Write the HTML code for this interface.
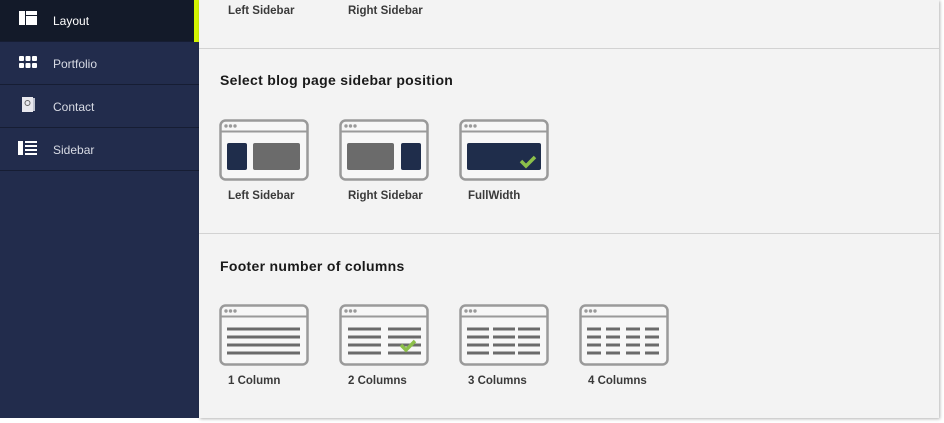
<!DOCTYPE html>
<html><head><meta charset="utf-8"><style>
*{margin:0;padding:0;box-sizing:border-box}
body{width:944px;height:423px;background:#fff;position:relative;overflow:hidden;font-family:"Liberation Sans",Arial,sans-serif}
#side{position:absolute;left:0;top:0;width:199px;height:418px;background:#222c4c}
.item{position:absolute;left:0;width:199px;height:42px;border-bottom:1px solid #161d33;color:#d8dbe4;font-size:12px}
.item span{position:absolute;left:53px;top:14px}
.item svg{position:absolute}
#main{position:absolute;left:199px;top:0;width:740px;height:418px;background:#f3f3f3;box-shadow:1px 1px 3px rgba(0,0,0,.3)}
.hr{position:absolute;left:0;width:740px;height:1px;background:#d2d2d2}
h3{position:absolute;left:21px;font-size:14px;font-weight:bold;color:#1a1a1a;letter-spacing:.3px}
.lbl{position:absolute;font-size:11.5px;font-weight:bold;color:#3a3a3a}
.th{position:absolute;width:90px;height:62px}
</style></head><body>
<div id="side">
 <div class="item" style="top:0;background:#131a29;color:#fff"><svg style="left:19px;top:11px" width="18" height="14"><rect x="0" y="0" width="6" height="14" fill="#fff"/><rect x="7" y="0" width="11" height="4" fill="#fff"/><rect x="7" y="5" width="11" height="9" fill="#fff"/></svg><span>Layout</span><div style="position:absolute;left:194px;top:0;width:5px;height:42px;background:#d4f500"></div></div>
 <div class="item" style="top:43px"><svg style="left:19px;top:13px" width="18" height="13" fill="#fff"><rect x="0" y="0" width="5" height="5" rx="1"/><rect x="6.5" y="0" width="5" height="5" rx="1"/><rect x="13" y="0" width="5" height="5" rx="1"/><rect x="0" y="7" width="5" height="5" rx="1"/><rect x="6.5" y="7" width="5" height="5" rx="1"/><rect x="13" y="7" width="5" height="5" rx="1"/></svg><span>Portfolio</span></div>
 <div class="item" style="top:86px"><svg style="left:22px;top:11px" width="14" height="15"><rect x="0" y="0" width="11" height="15" fill="#e8e8ee"/><rect x="11" y="1" width="2" height="13" fill="#bfc3cf"/><circle cx="5.5" cy="6" r="2.5" fill="none" stroke="#666" stroke-width="1"/></svg><span>Contact</span></div>
 <div class="item" style="top:129px"><svg style="left:18px;top:12px" width="19" height="14" fill="#fff"><rect x="0" y="0" width="5" height="14"/><rect x="7" y="0" width="12" height="2"/><rect x="7" y="4" width="12" height="2"/><rect x="7" y="8" width="12" height="2"/><rect x="7" y="12" width="12" height="2"/></svg><span>Sidebar</span></div>
</div>
<div id="main">
 <div class="lbl" style="left:29px;top:5px">Left Sidebar</div>
 <div class="lbl" style="left:149px;top:5px">Right Sidebar</div>
 <div class="hr" style="top:48px"></div>
 <h3 style="top:72px">Select blog page sidebar position</h3>
 <svg class="th" style="left:20px;top:119px"><use href="#frame"/><rect x="8" y="24" width="20" height="27" rx="2" fill="#1f2d4b"/><rect x="34" y="24" width="47" height="27" rx="2" fill="#6b6b6b"/></svg>
 <svg class="th" style="left:140px;top:119px"><use href="#frame"/><rect x="8" y="24" width="47" height="27" rx="2" fill="#6b6b6b"/><rect x="62" y="24" width="20" height="27" rx="2" fill="#1f2d4b"/></svg>
 <svg class="th" style="left:260px;top:119px"><use href="#frame"/><rect x="8" y="24" width="74" height="27" rx="2" fill="#1f2d4b"/><path d="M62 42 l5 5 l9 -9" stroke="#8cc04a" stroke-width="3.5" fill="none"/></svg>
 <div class="lbl" style="left:29px;top:190px">Left Sidebar</div>
 <div class="lbl" style="left:149px;top:190px">Right Sidebar</div>
 <div class="lbl" style="left:269px;top:190px">FullWidth</div>
 <div class="hr" style="top:233px"></div>
 <h3 style="top:258px">Footer number of columns</h3>
 <svg class="th" style="left:20px;top:304px"><use href="#frame"/><g stroke="#6b6b6b" stroke-width="3"><path d="M8 25H81M8 33H81M8 41H81M8 49H81"/></g></svg>
 <svg class="th" style="left:140px;top:304px"><use href="#frame"/><g stroke="#6b6b6b" stroke-width="3"><path d="M9 25H42M9 33H42M9 41H42M9 49H42M49 25H82M49 33H82M49 41H82M49 49H82"/></g><path d="M62 41 l5 5 l9 -9" stroke="#8cc04a" stroke-width="3.5" fill="none"/></svg>
 <svg class="th" style="left:260px;top:304px"><use href="#frame"/><g stroke="#6b6b6b" stroke-width="3"><path d="M8 25H30M8 33H30M8 41H30M8 49H30M34 25H56M34 33H56M34 41H56M34 49H56M59 25H81M59 33H81M59 41H81M59 49H81"/></g></svg>
 <svg class="th" style="left:380px;top:304px"><use href="#frame"/><g stroke="#6b6b6b" stroke-width="3"><path d="M8 25H22M8 33H22M8 41H22M8 49H22M27 25H41M27 33H41M27 41H41M27 49H41M47 25H61M47 33H61M47 41H61M47 49H61M66 25H80M66 33H80M66 41H80M66 49H80"/></g></svg>
 <div class="lbl" style="left:29px;top:375px">1 Column</div>
 <div class="lbl" style="left:149px;top:375px">2 Columns</div>
 <div class="lbl" style="left:269px;top:375px">3 Columns</div>
 <div class="lbl" style="left:389px;top:375px">4 Columns</div>
</div>
<svg width="0" height="0" style="position:absolute"><defs><g id="frame"><rect x="1.5" y="1.5" width="87" height="59" rx="5" fill="#f7f7f7" stroke="#9a9a9a" stroke-width="2.5"/><path d="M1.5 12.5H88.5" stroke="#9a9a9a" stroke-width="2"/><circle cx="7" cy="7" r="1.7" fill="#9a9a9a"/><circle cx="11.5" cy="7" r="1.7" fill="#9a9a9a"/><circle cx="16" cy="7" r="1.7" fill="#9a9a9a"/></g></defs></svg>
</body></html>
